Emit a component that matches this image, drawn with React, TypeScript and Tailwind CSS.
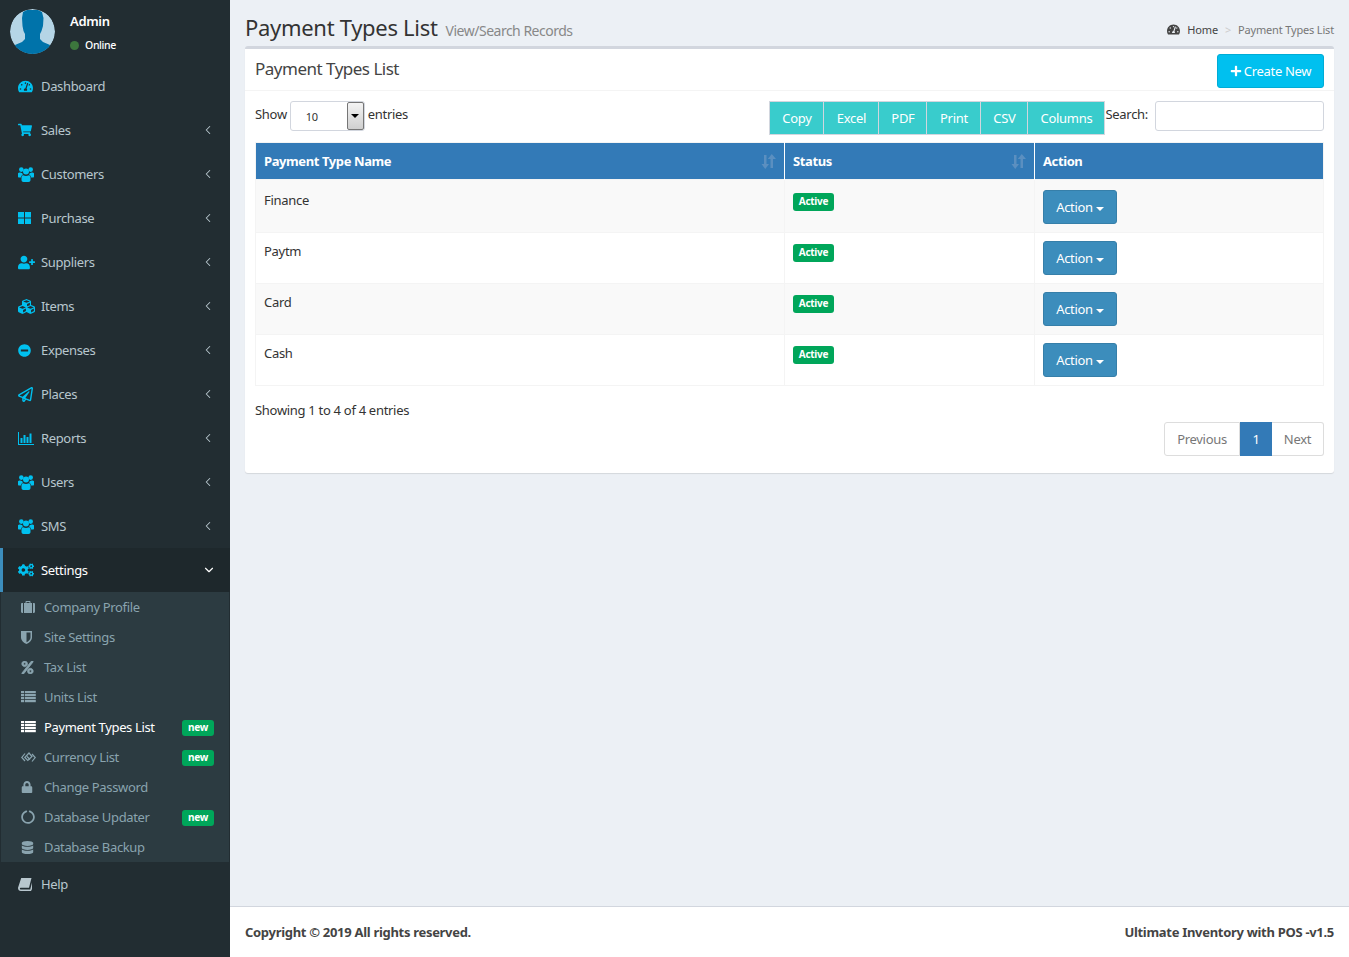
import type { ReactNode } from 'react'
import { ChevronDown, ChevronLeft } from 'lucide-react'
import {
  FaTachometerAlt, FaShoppingCart, FaUserPlus, FaCubes, FaMinusCircle,
  FaRegPaperPlane, FaCogs, FaLock, FaCircleNotch, FaDatabase, FaPlus, FaPercent,
} from 'react-icons/fa'

function UsersIcon() {
  return (
    <svg width="16" height="15" viewBox="0 0 16 15" fill="currentColor">
      <circle cx="3.300" cy="2.600" r="2.300" />
      <circle cx="12.700" cy="2.600" r="2.300" />
      <circle cx="8" cy="4.400" r="3" />
      <path d="M0 6.200C.6 5.500 1.500 5.300 2.200 5.600 2.900 6 3.600 6.200 4.300 6 4.300 7 4.800 7.700 5 8.100 3.700 8.400 3 9.300 2.900 10.500H1C.4 10.500 0 10.100 0 9.500z" />
      <path d="M16 6.200C15.400 5.500 14.500 5.300 13.800 5.600 13.100 6 12.400 6.200 11.700 6 11.700 7 11.200 7.700 11 8.100 12.300 8.400 13 9.300 13.100 10.500H15C15.600 10.500 16 10.100 16 9.500z" />
      <path d="M5.200 8.200C6.800 9.300 9.200 9.300 10.800 8.200 11.900 8.400 12.500 9.200 12.500 10.500V13C12.500 14.200 11.700 15 10.500 15H5.500C4.300 15 3.500 14.200 3.500 13V10.500C3.500 9.200 4.100 8.400 5.200 8.200z" />
    </svg>
  )
}

function SquaresIcon() {
  return (
    <svg width="13" height="12" viewBox="0 0 13 12" fill="currentColor">
      <rect width="6" height="5.500" />
      <rect x="7" width="6" height="5.500" />
      <rect y="6.500" width="6" height="5.500" />
      <rect x="7" y="6.500" width="6" height="5.500" />
    </svg>
  )
}

function ReportsIcon() {
  return (
    <svg width="16" height="13" viewBox="0 0 16 13" fill="currentColor">
      <rect x="0" y="0" width="1" height="13" />
      <rect x="0" y="12" width="16" height="1" />
      <rect x="2.500" y="6" width="2" height="5" />
      <rect x="5.500" y="3" width="2" height="8" />
      <rect x="8.500" y="5" width="2" height="6" />
      <rect x="11.500" y="1.500" width="2" height="9.500" />
    </svg>
  )
}

function BriefcaseIcon() {
  return (
    <svg width="14" height="12" viewBox="0 0 14 12" fill="currentColor">
      <path d="M4.500 2V1C4.500.4 4.900 0 5.500 0h3c.6 0 1 .4 1 1v1h-1V1h-3v1z" />
      <path d="M0 3.200C0 2.500.5 2 1.200 2H2v10h-.8C.5 12 0 11.500 0 10.800z" />
      <rect x="3" y="2" width="8" height="10" />
      <path d="M14 3.200C14 2.500 13.500 2 12.800 2H12v10h.8c.7 0 1.200-.5 1.200-1.200z" />
    </svg>
  )
}

function ShieldIcon() {
  return (
    <svg width="11" height="13" viewBox="0 0 11 13" fill="currentColor">
      <path d="M0 0h11v6.500c0 3-2.800 5.300-5.500 6.500C2.800 11.800 0 9.500 0 6.500zM5.500 1.500v9.800c2-1 4-2.700 4-4.800v-5z" fillRule="evenodd" />
    </svg>
  )
}

function CurrencyIcon() {
  return (
    <svg width="15" height="11" viewBox="0 0 15 11" fill="none" stroke="currentColor" strokeWidth="1.200">
      <path d="M4 1.500.8 5.500 4 9" />
      <path d="M11 2l3.200 3.500L11 9.500" />
      <path d="M8 1 3.800 5.500 6.800 8.500 11 4.500 8 1z" />
      <path d="M6 4.500l3 3" />
    </svg>
  )
}

function BookIcon() {
  return (
    <svg width="14" height="13" viewBox="0 0 14 13" fill="currentColor">
      <path d="M3.200 0H13.500L11 9.800H2.600C1.900 9.800 1.700 10.500 2 11c.2.400.6.500 1 .5h9.200L14 4.500V11l-1 2H2.800C1 13-.3 11.300.1 9.600z" />
    </svg>
  )
}

function ListIcon() {
  return (
    <svg width="15" height="12" viewBox="0 0 15 12" fill="currentColor">
      {[0, 3, 6, 9].map(y => (
        <g key={y}>
          <rect x="0" y={y} width="3" height="2.200" />
          <rect x="3.800" y={y} width="11" height="2.200" />
        </g>
      ))}
    </svg>
  )
}

const mainMenu: { label: string; icon: ReactNode; arrow?: boolean }[] = [
  { label: 'Dashboard', icon: <FaTachometerAlt className="text-[15px]" /> },
  { label: 'Sales', icon: <FaShoppingCart className="text-[14px]" />, arrow: true },
  { label: 'Customers', icon: <UsersIcon />, arrow: true },
  { label: 'Purchase', icon: <SquaresIcon />, arrow: true },
  { label: 'Suppliers', icon: <FaUserPlus className="text-[17px]" />, arrow: true },
  { label: 'Items', icon: <FaCubes className="text-[17px]" />, arrow: true },
  { label: 'Expenses', icon: <FaMinusCircle className="text-[13px]" />, arrow: true },
  { label: 'Places', icon: <FaRegPaperPlane className="text-[15px]" />, arrow: true },
  { label: 'Reports', icon: <ReportsIcon />, arrow: true },
  { label: 'Users', icon: <UsersIcon />, arrow: true },
  { label: 'SMS', icon: <UsersIcon />, arrow: true },
]

const subMenu: { label: string; icon: ReactNode; badge?: boolean; active?: boolean }[] = [
  { label: 'Company Profile', icon: <BriefcaseIcon /> },
  { label: 'Site Settings', icon: <ShieldIcon /> },
  { label: 'Tax List', icon: <FaPercent className="text-[13px]" stroke="currentColor" strokeWidth={30} /> },
  { label: 'Units List', icon: <ListIcon /> },
  { label: 'Payment Types List', icon: <ListIcon />, badge: true, active: true },
  { label: 'Currency List', icon: <CurrencyIcon />, badge: true },
  { label: 'Change Password', icon: <FaLock className="text-[12px]" /> },
  { label: 'Database Updater', icon: <FaCircleNotch className="text-[14px]" />, badge: true },
  { label: 'Database Backup', icon: <FaDatabase className="text-[13px]" /> },
]

const rows = ['Finance', 'Paytm', 'Card', 'Cash']
const exportButtons = [
  { label: 'Copy', width: 'w-[53px]' },
  { label: 'Excel', width: 'w-[55px]' },
  { label: 'PDF', width: 'w-[48px]' },
  { label: 'Print', width: 'w-[54px]' },
  { label: 'CSV', width: 'w-[47px]' },
  { label: 'Columns', width: 'w-[77px]' },
]

function Avatar() {
  return (
    <svg width="45" height="45" viewBox="0 0 45 45" className="rounded-full shrink-0">
      <circle cx="22.500" cy="22.500" r="22.500" fill="#b5d5e6" />
      <path fill="#0073aa" d="M17 1h11l4 2 1.500 6-.5 8-1.500 5-1.500 3v5l3 3 7 3 5 3v6H0v-6l5-3 7-3 3-3v-5l-1.500-3-1-5-.5-8 1-6z" />
    </svg>
  )
}

function SortIcon() {
  return (
    <svg width="15" height="15" viewBox="0 0 15 15" className="absolute right-[8px] top-[11px]" fill="#5b8fc0">
      <path d="M3 1h2.500v9H8l-3.750 5L.5 10H3z" />
      <path d="M9.500 14h2.500V5h3L10.750 0 6.800 5h2.700z" />
    </svg>
  )
}

function NewBadge() {
  return (
    <span className="ml-auto mr-[15px] mt-[2px] h-[16px] w-[32px] rounded-[3px] bg-[#00a65a] text-white text-[10px] font-bold leading-[15px] text-center">
      new
    </span>
  )
}

export default function App() {
  return (
    <div className="flex min-h-[957px] font-['Noto_Sans','Open_Sans',sans-serif] text-[13px] tracking-[-0.3px] text-[#333]">
      <aside className="w-[230px] shrink-0 bg-[#222d32] tracking-[-0.35px]">
        <div className="h-[64px] flex pl-[10px] pt-[9px]">
          <Avatar />
          <div className="ml-[15px] text-white">
            <div className="text-[13px] font-semibold leading-[18px] mt-[3px]">Admin</div>
            <div className="flex items-center text-[10.500px] font-medium mt-[8px] leading-[14px]">
              <span className="w-[9px] h-[9px] rounded-full bg-[#3c763d] mr-[6px]" />
              Online
            </div>
          </div>
        </div>
        <nav>
          {mainMenu.map(item => (
            <div key={item.label} className="h-[44px] flex items-center pl-[18px] text-[#b8c7ce]">
              <span className="w-[23px] text-[#00c0ef]">{item.icon}</span>
              <span className="pt-[2px]">{item.label}</span>
              {item.arrow && <ChevronLeft size={14} strokeWidth={1.8} className="ml-auto mr-[15px]" />}
            </div>
          ))}
          <div className="h-[44px] flex items-center pl-[15px] text-white bg-[#1e282c] border-l-[3px] border-[#3c8dbc]">
            <span className="w-[23px] text-[16px] text-[#00c0ef]"><FaCogs /></span>
            <span className="pt-[2px]">Settings</span>
            <ChevronDown size={14} strokeWidth={2} className="ml-auto mr-[14px]" />
          </div>
          <div className="ml-[1px] mr-[1px] bg-[#2c3b41]">
            {subMenu.map(item => (
              <div
                key={item.label}
                className={`h-[30px] flex items-center pl-[20px] ${item.active ? 'text-white' : 'text-[#8aa4af]'}`}
              >
                <span className="w-[23px]">{item.icon}</span>
                <span className="pt-[2px]">{item.label}</span>
                {item.badge && <NewBadge />}
              </div>
            ))}
          </div>
          <div className="h-[44px] flex items-center pl-[18px] text-[#b8c7ce]">
            <span className="w-[23px]"><BookIcon /></span>
            <span className="pt-[2px]">Help</span>
          </div>
        </nav>
      </aside>

      <div className="flex-1 min-w-0 flex flex-col bg-[#ecf0f5]">
        <main className="flex-1 px-[15px]">
          <header className="h-[46px] flex items-end justify-between">
            <div className="flex items-baseline pb-[4px]">
              <h1 className="text-[22px] leading-[30px] text-[#333]">Payment Types List</h1>
              <span className="ml-[8px] text-[14px] tracking-[-0.5px] text-[#888]">View/Search Records</span>
            </div>
            <div className="flex items-center text-[11px] tracking-[-0.17px] pb-[8px]">
              <FaTachometerAlt className="text-[13px] text-[#444] mr-[7px]" />
              <span className="text-[#444]">Home</span>
              <span className="mx-[7px] text-[#ccc]">&gt;</span>
              <span className="text-[#777]">Payment Types List</span>
            </div>
          </header>

          <section className="h-[427px] bg-white border-t-[3px] border-[#d2d6de] rounded-[3px] shadow-[0_1px_1px_rgba(0,0,0,0.1)]">
            <div className="h-[42px] flex items-start justify-between pl-[10px] pr-[10px] border-b border-[#f4f4f4]">
              <h2 className="text-[17px] tracking-[-0.5px] leading-[24px] mt-[8px] text-[#444]">Payment Types List</h2>
              <button className="mt-[5px] h-[34px] w-[107px] flex items-center justify-center rounded-[3px] bg-[#00c0ef] border border-[#00acd6] text-white text-[13px]">
                <FaPlus className="text-[12px] mr-[2px]" />
                <span className="pt-[1px]">Create New</span>
              </button>
            </div>

            <div className="px-[10px]">
              <div className="h-[51px] flex items-start pt-[10px]">
                <div className="flex items-start">
                  <span className="mt-[4px] mr-[3px]">Show</span>
                  <div className="relative w-[75px] h-[30px] border border-[#d2d6de] rounded-[3px] text-[11px] pl-[15px] leading-[29px]">
                    10
                    <span className="absolute right-0 top-0 bottom-0 w-[17px] border border-[#767676] rounded-[2px] bg-linear-to-b from-[#f4f4f4] to-[#cfcfcf] flex items-center justify-center">
                      <span className="border-x-[4px] border-t-[4px] border-x-transparent border-t-black" />
                    </span>
                  </div>
                  <span className="mt-[4px] ml-[3px]">entries</span>
                </div>
                <div className="ml-auto flex items-start">
                  <div className="flex border border-[#d2d6de] h-[34px]">
                    {exportButtons.map((b, i) => (
                      <div
                        key={b.label}
                        className={`${b.width} bg-[#39cccc] text-white text-center leading-[33px] ${i > 0 ? 'border-l border-[#d2d6de]' : ''}`}
                      >
                        {b.label}
                      </div>
                    ))}
                  </div>
                  <span className="mt-[4px] whitespace-nowrap">Search:</span>
                  <div className="ml-[7px] w-[169px] h-[30px] border border-[#d2d6de] rounded-[3px]" />
                </div>
              </div>

              <table className="w-[1069px] table-fixed border-collapse border border-[#f4f4f4]">
                <thead>
                  <tr className="h-[37px] bg-[#337ab7] text-white text-left">
                    <th className="relative w-[529px] pl-[8px] pt-[2px] font-bold tracking-[-0.4px] border-r border-white">
                      Payment Type Name
                      <SortIcon />
                    </th>
                    <th className="relative w-[250px] pl-[8px] pt-[2px] font-bold tracking-[-0.4px] border-r border-white">
                      Status
                      <SortIcon />
                    </th>
                    <th className="pl-[8px] pt-[2px] font-bold tracking-[-0.4px]">Action</th>
                  </tr>
                </thead>
                <tbody>
                  {rows.map((name, i) => (
                    <tr key={name} className={`border-t border-[#f4f4f4] ${i % 2 === 0 ? 'bg-[#f9f9f9]' : 'bg-white'}`}>
                      <td className={`align-top pl-[8px] border-r border-[#f4f4f4] ${i === 0 ? 'pt-[11px]' : 'pt-[9px]'}`}>{name}</td>
                      <td className={`align-top pl-[8px] border-r border-[#f4f4f4] ${i === 0 ? 'pt-[13px]' : 'pt-[11px]'}`}>
                        <span className="block w-[41px] h-[18px] rounded-[3px] bg-[#00a65a] text-white text-[10px] font-bold text-center leading-[17px]">
                          Active
                        </span>
                      </td>
                      <td className={`align-top pl-[8px] pb-[8px] ${i === 0 ? 'pt-[10px]' : 'pt-[8px]'}`}>
                        <button className="flex items-center justify-center w-[74px] h-[34px] rounded-[3px] bg-[#3c8dbc] border border-[#367fa9] text-white">
                          <span className="pt-[2px]">Action</span>
                          <span className="ml-[3px] mt-[3px] border-x-[4px] border-t-[4px] border-x-transparent border-t-white" />
                        </button>
                      </td>
                    </tr>
                  ))}
                </tbody>
              </table>

              <div className="mt-[14px] leading-[20px]">Showing 1 to 4 of 4 entries</div>
              <div className="mt-[2px] flex justify-end">
                <div className="flex h-[34px] text-[#777]">
                  <span className="w-[76px] pt-[1px] flex items-center justify-center border border-[#ddd] rounded-l-[3px]">Previous</span>
                  <span className="w-[32px] pt-[1px] flex items-center justify-center bg-[#337ab7] text-white">1</span>
                  <span className="w-[52px] pt-[1px] flex items-center justify-center border border-l-0 border-[#ddd] rounded-r-[3px]">Next</span>
                </div>
              </div>
            </div>
          </section>
        </main>

        <footer className="h-[51px] flex items-center justify-between px-[15px] pt-[2px] bg-white border-t border-[#d2d6de] font-bold text-[#444]">
          <span>Copyright © 2019 All rights reserved.</span>
          <span>Ultimate Inventory with POS -v1.5</span>
        </footer>
      </div>
    </div>
  )
}
